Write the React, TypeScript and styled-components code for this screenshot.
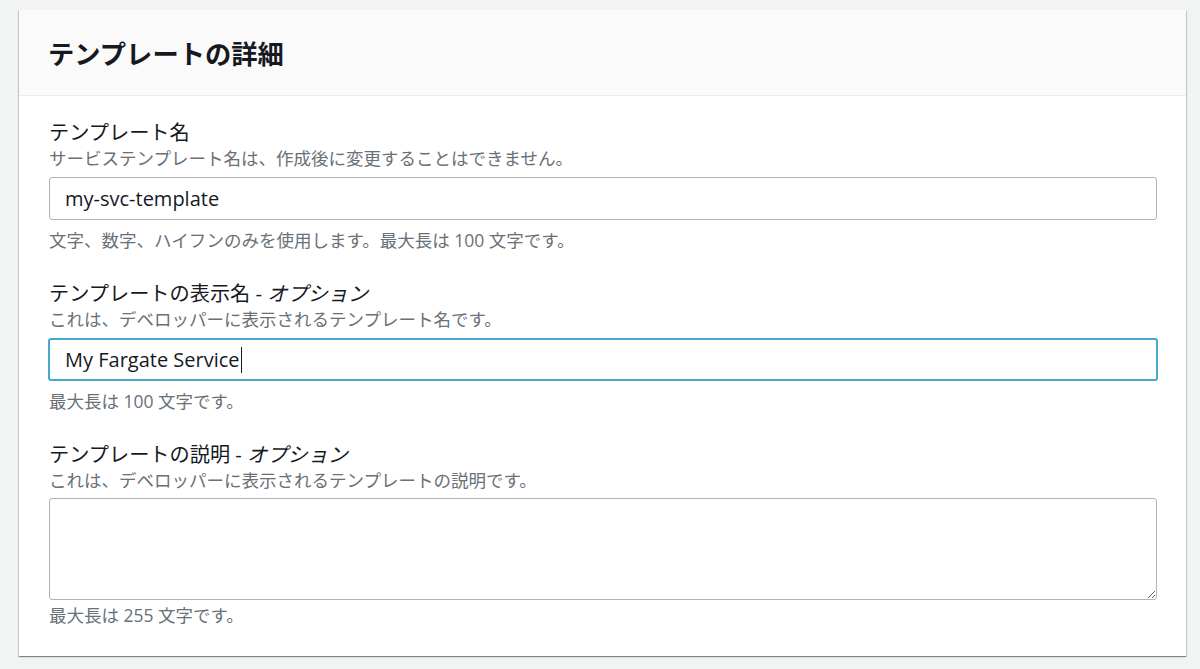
import styled, { createGlobalStyle } from "styled-components";

const GlobalStyle = createGlobalStyle`
  html, body {
    margin: 0;
    padding: 0;
    background: #f2f3f3;
  }
  body {
    font-family: "Open Sans", "Noto Sans CJK JP", sans-serif;
    color: #16191f;
  }
`;

const Page = styled.div`
  padding: 10px 14px 12px 19px;
`;

const Card = styled.section`
  background: #ffffff;
  box-shadow: 0 1px 1px 0 rgba(0, 28, 36, 0.3), 1px 1px 1px 0 rgba(0, 28, 36, 0.15),
    -1px 1px 1px 0 rgba(0, 28, 36, 0.15);
`;

const Header = styled.header`
  height: 85px;
  display: flex;
  align-items: center;
  padding: 0 30px;
  background: #fafafa;
  border-bottom: 1px solid #eaeded;
`;

const Title = styled.h2`
  margin: 0 0 0 -1px;
  font-size: 26.3px;
  font-weight: 700;
  color: #16191f;
`;

const Body = styled.div`
  display: flex;
  flex-direction: column;
  gap: 28px;
  padding: 22px 29px 30px 30px;
`;

const Field = styled.div`
  display: flex;
  flex-direction: column;
`;

const Label = styled.label`
  font-size: 20.2px;
  line-height: 28px;
  margin-bottom: 1px;
  color: #16191f;

  em {
    font-style: italic;
  }
`;

const Description = styled.div`
  font-size: 17.5px;
  line-height: 22px;
  color: #687078;
`;

const Constraint = styled(Description)<{ $tight?: boolean }>`
  margin-top: ${(p) => (p.$tight ? 4 : 9)}px;
`;

const Input = styled.div<{ $focused?: boolean }>`
  box-sizing: border-box;
  margin-top: 8px;
  height: 43px;
  display: flex;
  align-items: center;
  padding: 0 15px;
  border: ${(p) => (p.$focused ? "2px solid #46a7cf" : "1px solid #aab7b8")};
  border-radius: 3px;
  font-size: 20px;
  color: #16191f;
  background: #ffffff;
  margin-left: ${(p) => (p.$focused ? -1 : 0)}px;
  margin-right: ${(p) => (p.$focused ? -1 : 0)}px;
`;

const Caret = styled.span`
  display: inline-block;
  width: 1px;
  height: 26px;
  margin-left: 1px;
  background: #16191f;
`;

const TextArea = styled.textarea`
  box-sizing: border-box;
  margin-top: 7px;
  height: 102px;
  width: 100%;
  border: 1px solid #aab7b8;
  border-radius: 3px;
  resize: vertical;
  font-family: inherit;
  font-size: 20px;
  padding: 8px 16px;
  outline: none;
  display: block;
`;

export default function App() {
  return (
    <>
      <GlobalStyle />
      <Page>
        <Card>
          <Header>
            <Title>テンプレートの詳細</Title>
          </Header>
          <Body>
            <Field>
              <Label>テンプレート名</Label>
              <Description>サービステンプレート名は、作成後に変更することはできません。</Description>
              <Input>my-svc-template</Input>
              <Constraint>文字、数字、ハイフンのみを使用します。最大長は 100 文字です。</Constraint>
            </Field>
            <Field>
              <Label>
                テンプレートの表示名 - <em>オプション</em>
              </Label>
              <Description>これは、デベロッパーに表示されるテンプレート名です。</Description>
              <Input $focused>
                My Fargate Service
                <Caret />
              </Input>
              <Constraint>最大長は 100 文字です。</Constraint>
            </Field>
            <Field>
              <Label>
                テンプレートの説明 - <em>オプション</em>
              </Label>
              <Description>これは、デベロッパーに表示されるテンプレートの説明です。</Description>
              <TextArea />
              <Constraint $tight>最大長は 255 文字です。</Constraint>
            </Field>
          </Body>
        </Card>
      </Page>
    </>
  );
}
